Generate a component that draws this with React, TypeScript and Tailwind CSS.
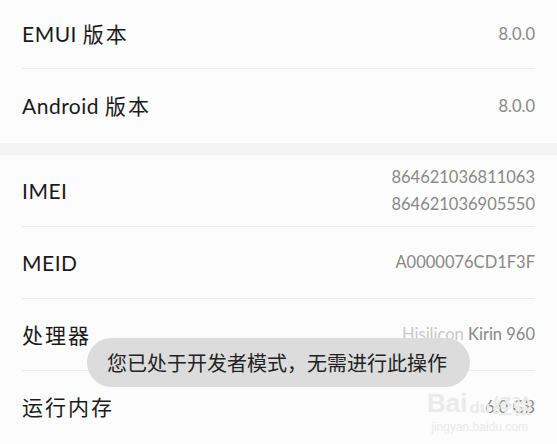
import React from 'react';

interface RowProps {
    label: string;
    values: React.ReactNode[];
    height: string;
    last?: boolean;
}

// CJK glyphs in the reference sit a little looser than the latin ones
const Label: React.FC<{ text: string }> = ({ text }) => {
    const parts = text.split(/([\u4e00-\u9fff]+)/).filter(Boolean);
    return (
        <span className="text-[21px] text-[#1a1a1a] tracking-[0.5px]">
            {parts.map((p, i) =>
                /[\u4e00-\u9fff]/.test(p) ? (
                    <span key={i} className="tracking-[2px]">{p}</span>
                ) : (
                    <span key={i}>{p}</span>
                )
            )}
        </span>
    );
};

const Row: React.FC<RowProps> = ({ label, values, height, last = false }) => (
    <div className="px-[22px]">
        <div className={`flex items-center justify-between ${height} ${last ? '' : 'border-b border-[#ebebeb]'}`}>
            <Label text={label} />
            <div className="flex flex-col items-end gap-[6px] text-[16.5px] font-normal text-[#888888] leading-[21px]">
                {values.map((v, i) => (
                    <span key={i}>{v}</span>
                ))}
            </div>
        </div>
    </div>
);

export default function App() {
    return (
        <div
            className="relative w-[557px] h-[444px] overflow-hidden bg-[#fcfcfc]"
            style={{ fontFamily: 'Lato, "Noto Sans CJK SC", sans-serif' }}
        >
            <Row label="EMUI 版本" values={['8.0.0']} height="h-[69px]" />
            <Row label="Android 版本" values={['8.0.0']} height="h-[74px]" last />

            <div className="h-[12px] bg-[#f4f4f4]" />

            <Row label="IMEI" values={['864621036811063', '864621036905550']} height="h-[72px]" />
            <Row label="MEID" values={['A0000076CD1F3F']} height="h-[72px]" />
            <Row
                label="处理器"
                values={[
                    <>
                        <span className="text-[#c8c8c8]">Hisilicon</span> Kirin 960
                    </>,
                ]}
                height="h-[72px]"
            />
            <Row label="运行内存" values={['6.0 GB']} height="h-[72px]" last />

            {/* toast */}
            <div className="absolute left-[87px] top-[338px] w-[383px] h-[49px] rounded-full bg-[#dcdcdc] flex items-center pl-[20px]">
                <span className="text-[20px] text-[#222] leading-none">您已处于开发者模式，无需进行此操作</span>
            </div>

            {/* watermark */}
            <div className="absolute left-[427px] top-[390px] flex flex-col items-center text-[#eaeaea] pointer-events-none">
                <div className="flex items-end leading-none">
                    <span className="text-[26px] font-bold" style={{ fontFamily: '"Liberation Sans", sans-serif' }}>Bai</span>
                    <span className="text-[17px] font-bold ml-[2px]" style={{ fontFamily: '"Liberation Sans", sans-serif' }}>du</span>
                    <span className="text-[20px] font-bold ml-[2px]">经验</span>
                </div>
                <span className="text-[12px] mt-[2px]" style={{ fontFamily: '"Liberation Sans", sans-serif' }}>jingyan.baidu.com</span>
            </div>
        </div>
    );
}
